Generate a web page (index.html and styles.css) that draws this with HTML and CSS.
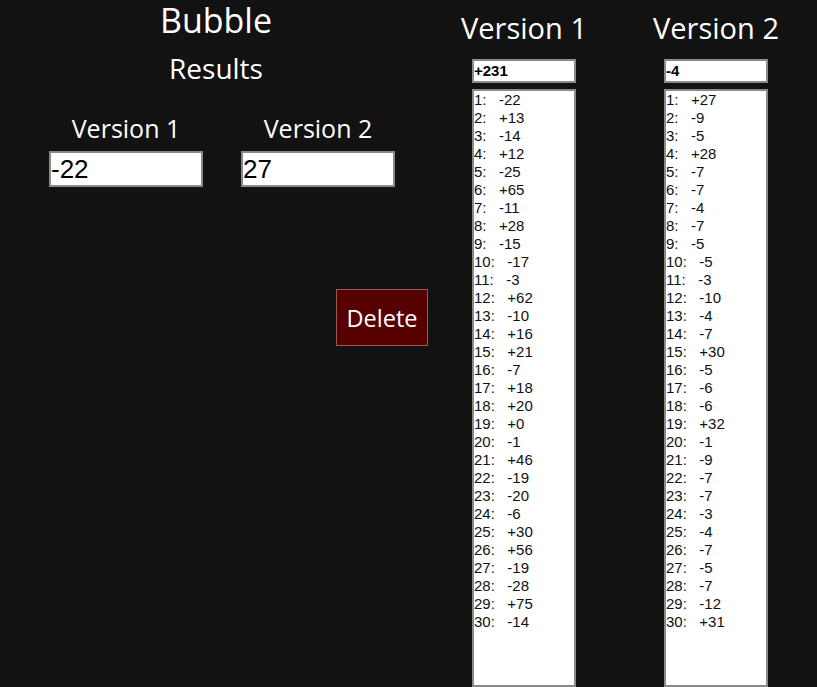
FILE: index.html
```html
<!DOCTYPE html>
<html>
<head>
<meta charset="utf-8">
<link rel="stylesheet" href="styles.css">
</head>
<body>
<div class="page">
  <section class="left">
    <h1 class="title">Bubble</h1>
    <h2 class="subtitle">Results</h2>
    <div class="pair">
      <div class="field">
        <div class="field-label">Version 1</div>
        <div class="field-box">-22</div>
      </div>
      <div class="field">
        <div class="field-label">Version 2</div>
        <div class="field-box">27</div>
      </div>
    </div>
    <div class="actions">
      <button class="delete">Delete</button>
    </div>
  </section>
  <section class="col">
    <div class="col-head">Version 1</div>
    <div class="total">+231</div>
    <div class="list">1:   -22
2:   +13
3:   -14
4:   +12
5:   -25
6:   +65
7:   -11
8:   +28
9:   -15
10:   -17
11:   -3
12:   +62
13:   -10
14:   +16
15:   +21
16:   -7
17:   +18
18:   +20
19:   +0
20:   -1
21:   +46
22:   -19
23:   -20
24:   -6
25:   +30
26:   +56
27:   -19
28:   -28
29:   +75
30:   -14</div>
  </section>
  <section class="col col2">
    <div class="col-head">Version 2</div>
    <div class="total">-4</div>
    <div class="list">1:   +27
2:   -9
3:   -5
4:   +28
5:   -7
6:   -7
7:   -4
8:   -7
9:   -5
10:   -5
11:   -3
12:   -10
13:   -4
14:   -7
15:   +30
16:   -5
17:   -6
18:   -6
19:   +32
20:   -1
21:   -9
22:   -7
23:   -7
24:   -3
25:   -4
26:   -7
27:   -5
28:   -7
29:   -12
30:   +31</div>
  </section>
</div>
</body>
</html>
```
FILE: styles.css
```css
html, body {
  margin: 0;
  padding: 0;
  background: #121212;
  height: 100%;
  overflow: hidden;
}
body {
  font-family: "Open Sans", "Noto Sans", sans-serif;
  color: #ffffff;
}
.page {
  display: flex;
  align-items: flex-start;
}
.left {
  width: 472px;
  flex: none;
}
.title {
  margin: 0;
  width: 432px;
  text-align: center;
  font-size: 34px;
  font-weight: 400;
  line-height: 40px;
}
.subtitle {
  margin: 12px 0 0;
  width: 432px;
  text-align: center;
  font-size: 28px;
  font-weight: 400;
  line-height: 32px;
}
.pair {
  display: flex;
  gap: 38px;
  padding-left: 49px;
  margin-top: 30px;
}
.field {
  width: 154px;
  display: flex;
  flex-direction: column;
  align-items: center;
}
.field-label {
  font-size: 25px;
  line-height: 28px;
  white-space: nowrap;
}
.field-box {
  margin-top: 9px;
  box-sizing: border-box;
  width: 154px;
  height: 36px;
  background: #fff;
  border: 2px solid #8a8a8a;
  color: #000;
  font-family: "Liberation Sans", Arial, sans-serif;
  font-size: 26px;
  line-height: 32px;
  padding-left: 0;
}
.actions {
  padding-left: 336px;
  margin-top: 102px;
}
.delete {
  box-sizing: border-box;
  width: 92px;
  height: 57px;
  background: #560000;
  border: 1px solid #9a5a5a;
  color: #fff;
  font-family: "Open Sans", "Noto Sans", sans-serif;
  font-size: 23.5px;
  padding: 0;
}
.col {
  width: 104px;
  flex: none;
  display: flex;
  flex-direction: column;
  align-items: center;
}
.col2 {
  margin-left: 88px;
}
.col-head {
  margin-top: 10px;
  font-size: 29px;
  line-height: 36px;
  white-space: nowrap;
}
.total {
  margin-top: 13px;
  box-sizing: border-box;
  width: 104px;
  height: 24px;
  background: #fff;
  border: 2px solid #8a8a8a;
  color: #000;
  font-family: "Liberation Sans", Arial, sans-serif;
  font-weight: 700;
  font-size: 15px;
  line-height: 20px;
}
.list {
  margin-top: 6px;
  box-sizing: border-box;
  width: 104px;
  height: 598px;
  background: #fff;
  border: 2px solid #8a8a8a;
  color: #111;
  font-family: "Liberation Sans", Arial, sans-serif;
  font-size: 15px;
  line-height: 18px;
  white-space: pre;
  padding-top: 0;
}
```
